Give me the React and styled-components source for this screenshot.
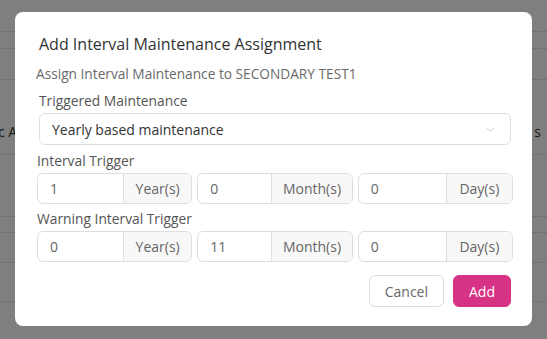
import styled, { createGlobalStyle } from "styled-components"
import { ChevronDown } from "lucide-react"

const GlobalStyle = createGlobalStyle`
    html, body {
        margin: 0;
        padding: 0;
        width: 547px;
        height: 339px;
        overflow: hidden;
        font-family: "Open Sans", "Lato", sans-serif;
    }
`

const backRows = [
    { h: 32, text: "" },
    { h: 17, text: "" },
    { h: 31, text: "" },
    { h: 75, text: "c A", right: "s", pad: 28 },
    { h: 62, text: "" },
    { h: 16, text: "" },
    { h: 30, text: "" },
    { h: 39, text: "" },
]

const triggers = [
    { label: "Interval Trigger", values: ["1", "0", "0"], top: 6 },
    { label: "Warning Interval Trigger", values: ["0", "11", "0"], top: 5 },
]

const units = [
    { name: "Year(s)", input: 86 },
    { name: "Month(s)", input: 74 },
    { name: "Day(s)", input: 88 },
]

export default function App() {
    return (
        <Page>
            <GlobalStyle />
            <BackTable>
                {backRows.map((row, i) => (
                    <BackRow key={i} $h={row.h} $pad={row.pad || 0}>
                        <span>{row.text}</span>
                        <span>{row.right}</span>
                    </BackRow>
                ))}
            </BackTable>

            <Overlay>
                <Modal>
                    <Title>Add Interval Maintenance Assignment</Title>
                    <Subtitle>Assign Interval Maintenance to SECONDARY TEST1</Subtitle>

                    <Label $indent={3} $top={7}>Triggered Maintenance</Label>
                    <Select>
                        <span>Yearly based maintenance</span>
                        <ChevronDown size={15} strokeWidth={1} color="#b5b5b5" />
                    </Select>

                    {triggers.map((t) => (
                        <div key={t.label}>
                            <Label $indent={1} $top={t.top}>{t.label}</Label>
                            <InputRow>
                                {units.map((u, i) => (
                                    <InputGroup key={u.name}>
                                        <Field $w={u.input}>{t.values[i]}</Field>
                                        <Addon>{u.name}</Addon>
                                    </InputGroup>
                                ))}
                            </InputRow>
                        </div>
                    ))}

                    <Footer>
                        <Button>Cancel</Button>
                        <Button $primary>Add</Button>
                    </Footer>
                </Modal>
            </Overlay>
        </Page>
    )
}

const Page = styled.div`
    position: relative;
    width: 547px;
    height: 339px;
    background: #fff;
    overflow: hidden;
`
const BackTable = styled.div`
    display: flex;
    flex-direction: column;
`
const BackRow = styled.div`
    height: ${(p) => p.$h}px;
    box-sizing: border-box;
    padding-top: ${(p) => p.$pad}px;
    border-bottom: 1px solid #e4e4e4;
    display: flex;
    align-items: center;
    justify-content: space-between;
    font-size: 14px;
    color: #333;
    span:first-child {
        margin-left: -2px;
    }
    span:last-child {
        margin-right: 6px;
    }
`
const Overlay = styled.div`
    position: absolute;
    inset: 0;
    background: rgba(0, 0, 0, 0.5);
    padding: 12px 15px 0 15px;
`
const Modal = styled.div`
    width: 517px;
    height: 314px;
    box-sizing: border-box;
    background: #fff;
    border-radius: 8px;
    padding: 20px 19px 0 22px;
    display: flex;
    flex-direction: column;
`
const Title = styled.h2`
    margin: 0 0 0 2px;
    font-size: 16px;
    line-height: 24px;
    font-weight: 500;
    color: #333;
`
const Subtitle = styled.p`
    margin: 8px 0 0 -1px;
    font-size: 13.7px;
    line-height: 20px;
    color: #6a6a6a;
`
const Label = styled.div`
    margin: ${(p) => p.$top}px 0 2px ${(p) => p.$indent - 1}px;
    font-size: 13.8px;
    line-height: 20px;
    color: #555;
`
const Select = styled.div`
    margin: 0 2px 0 2px;
    height: 32px;
    box-sizing: border-box;
    border: 1px solid #dedede;
    border-radius: 6px;
    padding: 0 12px;
    display: flex;
    align-items: center;
    justify-content: space-between;
    font-size: 14px;
    color: #333;
`
const InputRow = styled.div`
    display: flex;
    gap: 5px;
    margin-top: 1px;
`
const InputGroup = styled.div`
    display: flex;
    height: 31px;
    box-sizing: border-box;
    border: 1px solid #dedede;
    border-radius: 6px;
    overflow: hidden;
    flex: 1;
`
const Field = styled.div`
    width: ${(p) => p.$w}px;
    padding-left: 12px;
    box-sizing: border-box;
    display: flex;
    align-items: center;
    font-size: 14px;
    color: #666;
    border-right: 1px solid #dedede;
`
const Addon = styled.div`
    flex: 1;
    display: flex;
    align-items: center;
    justify-content: center;
    background: #f8f8f8;
    font-size: 14px;
    color: #666;
`
const Footer = styled.div`
    display: flex;
    justify-content: flex-end;
    gap: 9px;
    margin-top: 13px;
    padding-right: 2px;
`
const Button = styled.button`
    height: 32px;
    padding: 0 15px;
    min-width: ${(p) => (p.$primary ? 58 : 75)}px;
    border-radius: 6px;
    border: 1px solid ${(p) => (p.$primary ? "#d63384" : "#dcdcdc")};
    background: ${(p) => (p.$primary ? "#d63384" : "#fff")};
    color: ${(p) => (p.$primary ? "#fff" : "#666")};
    font-family: inherit;
    font-size: 14px;
`
